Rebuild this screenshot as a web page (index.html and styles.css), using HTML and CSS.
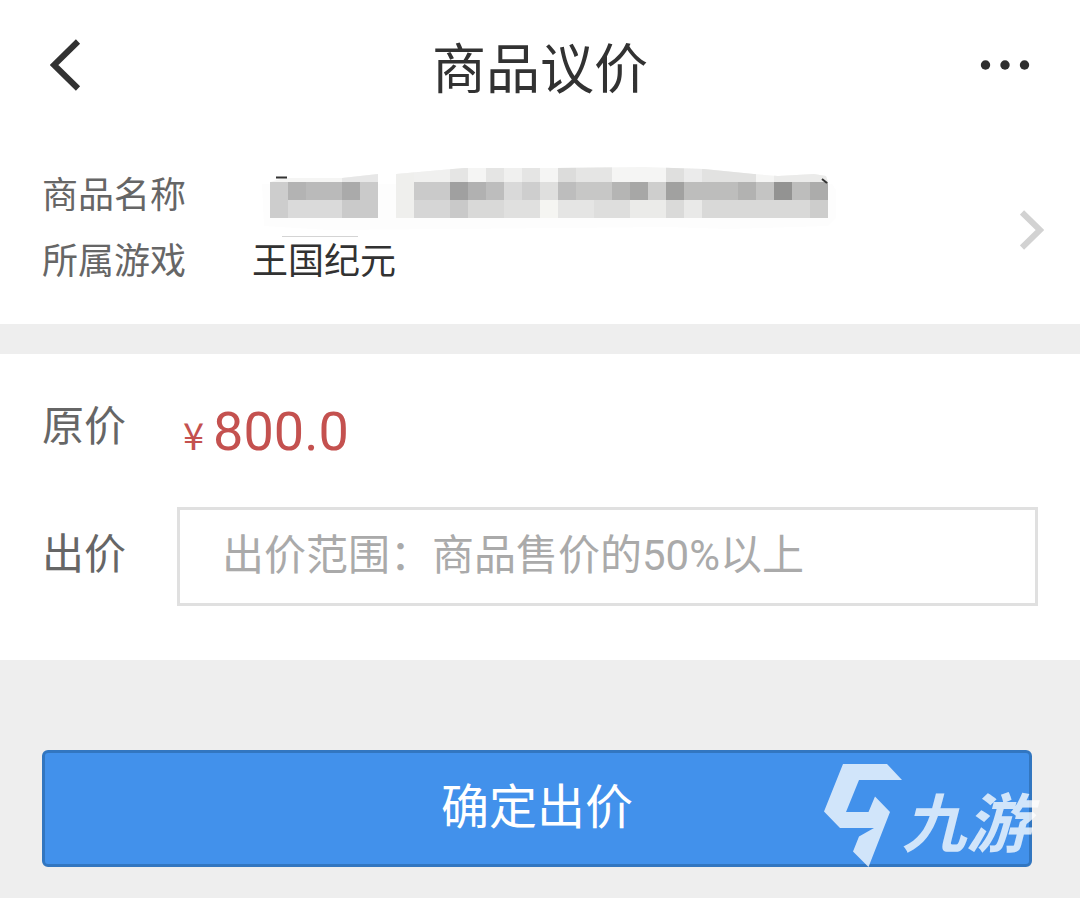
FILE: index.html
```html
<!DOCTYPE html>
<html lang="zh-CN">
<head>
<meta charset="utf-8">
<meta name="viewport" content="width=device-width, initial-scale=1">
<title>商品议价</title>
<link rel="stylesheet" href="styles.css">
</head>
<body>
<header class="topbar">
  <button class="icon-button" type="button" aria-label="返回">
    <svg class="back-icon" viewBox="0 0 32 52" aria-hidden="true"><path d="M28 2.500 4 26l24 23.500" fill="none" stroke="#323232" stroke-width="6"/></svg>
  </button>
  <h1 class="title">商品议价</h1>
  <button class="icon-button icon-button-end" type="button" aria-label="更多">
    <svg class="more-icon" viewBox="0 0 50 10" aria-hidden="true" fill="#2e2e2e"><circle cx="5.500" cy="5" r="4.700"/><circle cx="25" cy="5" r="4.700"/><circle cx="44.500" cy="5" r="4.700"/></svg>
  </button>
</header>
<main>
  <a class="product" href="#product">
    <dl class="details">
      <dt class="term">商品名称</dt>
      <dd class="value">
        <svg class="mosaic" viewBox="-2 0 588 78" role="img" aria-label="名称已隐藏">
          <defs><clipPath id="edge"><path d="M16 20 30 16 88 16 124 12V56H16ZM142 12 210 6 300 6 390 5 450 7 500 12 524 14 560 12 572 14 574 20V56H142Z"/></clipPath></defs>
          <path d="M8 22h570l4 6v28l-8 8-100 3-60-2-340 3-64-4z" fill="#fdfdfd"/>
          <g clip-path="url(#edge)">
            <path d="M16 0h558v56H16z" fill="#f5f5f4"/>
            <path d="M124 0h18v60h-18z" fill="#fdfdfd"/>
            <path d="M16 20h18v36H16z" fill="#cdcdcd"/><path d="M34 20h54v18H34z" fill="#bababa"/><path d="M34 20h18v18H34z" fill="#b3b3b3"/><path d="M88 20h18v18H88z" fill="#aaa"/>
            <path d="M34 38h54v18H34z" fill="#dadada"/><path d="M88 38h18v18H88zM106 20h18v36h-18z" fill="#cacaca"/><path d="M88 10h36v10H88z" fill="#e7e7e7"/>
            <path d="M142 0h18v56h-18z" fill="#efefed"/>
            <path d="M160 0h36v20h-36zM250 0h18v20h-18z" fill="#f0f0ef"/><path d="M196 0h18v20h-18zM232 0h18v20h-18zM268 0h18v20h-18z" fill="#e5e5e4"/>
            <path d="M160 20h36v18h-36z" fill="#cacaca"/><path d="M196 20h18v18h-18z" fill="#a0a0a0"/><path d="M214 20h18v18h-18z" fill="#b1b1b1"/><path d="M232 20h18v18h-18z" fill="#bdbdbd"/><path d="M250 20h18v18h-18z" fill="#d9d9d9"/><path d="M268 20h18v18h-18z" fill="#cecece"/><path d="M286 20h18v18h-18z" fill="#dfdfde"/>
            <path d="M160 38h36v18h-36z" fill="#d6d6d6"/><path d="M196 38h18v18h-18z" fill="#c9c9c9"/><path d="M214 38h36v18h-36z" fill="#d9d9d8"/><path d="M250 38h36v18h-36z" fill="#e0e0df"/><path d="M286 38h18v18h-18z" fill="#f5f5f2"/>
            <path d="M304 0h18v20h-18z" fill="#dcdcdb"/><path d="M322 0h36v20h-36z" fill="#e5e5e4"/><path d="M412 0h18v20h-18z" fill="#dfdfde"/><path d="M430 0h18v20h-18z" fill="#ebebeb"/><path d="M448 0h54v20h-54z" fill="#e2e2e1"/><path d="M520 0h54v20h-54z" fill="#ebebea"/>
            <path d="M304 20h18v18h-18z" fill="#bdbdbd"/><path d="M322 20h36v18h-36z" fill="#c7c7c6"/><path d="M358 20h18v18h-18z" fill="#b5b5b4"/><path d="M376 20h18v18h-18z" fill="#a7a7a6"/><path d="M394 20h18v18h-18z" fill="#cececd"/><path d="M412 20h18v18h-18z" fill="#a1a1a0"/><path d="M430 20h54v18h-54z" fill="#bdbdbc"/><path d="M484 20h18v18h-18z" fill="#b2b2b1"/><path d="M502 20h18v18h-18z" fill="#c4c4c3"/><path d="M520 20h18v18h-18z" fill="#939392"/><path d="M538 20h18v18h-18z" fill="#bdbdbc"/><path d="M556 20h18v18h-18z" fill="#acacab"/>
            <path d="M304 38h36v18h-36z" fill="#e5e5e4"/><path d="M340 38h36v18h-36z" fill="#dededd"/><path d="M376 38h36v18h-36z" fill="#ebebe9"/><path d="M412 38h18v18h-18z" fill="#dadad9"/><path d="M430 38h18v18h-18z" fill="#e9e9e8"/><path d="M448 38h108v18H448z" fill="#d9d9d8"/><path d="M556 38h18v18h-18z" fill="#cdcdcc"/>
          </g>
          <path d="M22 15.500h11M568 17l5 4" stroke="#333" stroke-width="2" fill="none"/>
          <path d="M28 74.500h76" stroke="#d4d4d4"/>
        </svg>
      </dd>
      <dt class="term">所属游戏</dt>
      <dd class="value">王国纪元</dd>
    </dl>
    <svg class="chevron" viewBox="0 0 24 40" aria-hidden="true"><path d="m2 2.500 18 17.500L2 37.500" fill="none" stroke="#d2d2d2" stroke-width="6"/></svg>
  </a>
  <form class="offer" id="offer">
    <div class="row">
      <span class="label">原价</span>
      <span class="price"><span class="currency">¥</span>800.0</span>
    </div>
    <div class="row">
      <label class="label" for="bid">出价</label>
      <input class="bid" id="bid" type="text" inputmode="decimal" placeholder="出价范围：商品售价的50%以上">
    </div>
  </form>
  <div class="actions">
    <button class="submit" type="submit" form="offer">确定出价</button>
    <div class="brand">
      <svg class="brand-mark" viewBox="0 0 78 104" aria-hidden="true"><path d="M19 0h44l15 16H35L22 48h22.500L51 32.500 66 48l-21.500 55L29 87.500l6-15L50 64H16L0 47.500Z" fill="currentColor"/></svg>
      <span class="brand-name">九游</span>
    </div>
  </div>
</main>
</body>
</html>
```
FILE: styles.css
```css
* {
  box-sizing: border-box;
}

body {
  margin: 0;
  background: #eee;
  color: #323232;
  font-family: "Noto Sans CJK SC", "Noto Sans", sans-serif;
}

button,
input {
  font-family: inherit;
}

.topbar {
  display: grid;
  grid-template-columns: 1fr auto 1fr;
  align-items: center;
  height: 130px;
  padding: 0 50px;
  background: #fff;
}

.icon-button {
  justify-self: start;
  display: flex;
  padding: 0;
  border: 0;
  background: none;
}

.icon-button-end {
  justify-self: end;
}

.back-icon {
  width: 32px;
  height: 52px;
}

.more-icon {
  width: 50px;
  height: 10px;
}

.title {
  margin: 0;
  padding-top: 2px;
  font-size: 54px;
  font-weight: 400;
  line-height: 80px;
}

.product {
  display: flex;
  align-items: flex-end;
  justify-content: space-between;
  padding: 29px 36px 33px 42px;
  background: #fff;
  color: inherit;
  text-decoration: none;
}

.details {
  display: grid;
  grid-template-columns: 144px 1fr;
  column-gap: 66px;
  margin: 0;
  font-size: 36px;
  line-height: 66px;
}

.term {
  color: #666;
}

.value {
  height: 66px;
  margin: 0;
}

.mosaic {
  display: block;
  width: 588px;
  height: 78px;
  margin-top: 3px;
}

.chevron {
  width: 24px;
  height: 40px;
  margin-bottom: 41px;
}

.offer {
  margin-top: 30px;
  padding: 42px 42px 54px;
  background: #fff;
}

.row {
  display: flex;
  align-items: center;
}

.row + .row {
  margin-top: 45px;
}

.label {
  flex: none;
  width: 135px;
  padding-bottom: 12px;
  color: #666;
  font-size: 42px;
  line-height: 54px;
}

.price {
  display: flex;
  align-items: baseline;
  gap: 9px;
  padding: 6px 0 0 6px;
  color: #c4514f;
  font-family: Roboto, sans-serif;
  font-size: 54px;
  line-height: 60px;
}

.currency {
  font-family: "Noto Sans CJK SC", sans-serif;
  font-size: 38px;
  line-height: 38px;
}

.bid {
  flex: 1;
  min-width: 0;
  height: 99px;
  padding: 0 42px 2px;
  border: 3px solid #e0e0e0;
  border-radius: 0;
  background: #fff;
  color: #323232;
  font-family: Roboto, "Noto Sans CJK SC", sans-serif;
  font-size: 42px;
}

.bid::placeholder {
  color: #aaa;
  opacity: 1;
}

.actions {
  position: relative;
  padding: 90px 48px 30px 42px;
}

.submit {
  display: block;
  width: 100%;
  height: 117px;
  padding: 0 0 12px;
  border: 3px solid #3276c0;
  border-radius: 6px;
  background: #4291eb;
  color: #fff;
  font-size: 48px;
}

.brand {
  position: absolute;
  top: 104px;
  right: 50px;
  display: flex;
  align-items: flex-start;
  color: rgba(255, 255, 255, 0.76);
  pointer-events: none;
}

.brand-mark {
  width: 78px;
  height: 104px;
}

.brand-name {
  padding-top: 3px;
  font-size: 64px;
  font-style: italic;
  font-weight: 700;
  line-height: 104px;
}
```
